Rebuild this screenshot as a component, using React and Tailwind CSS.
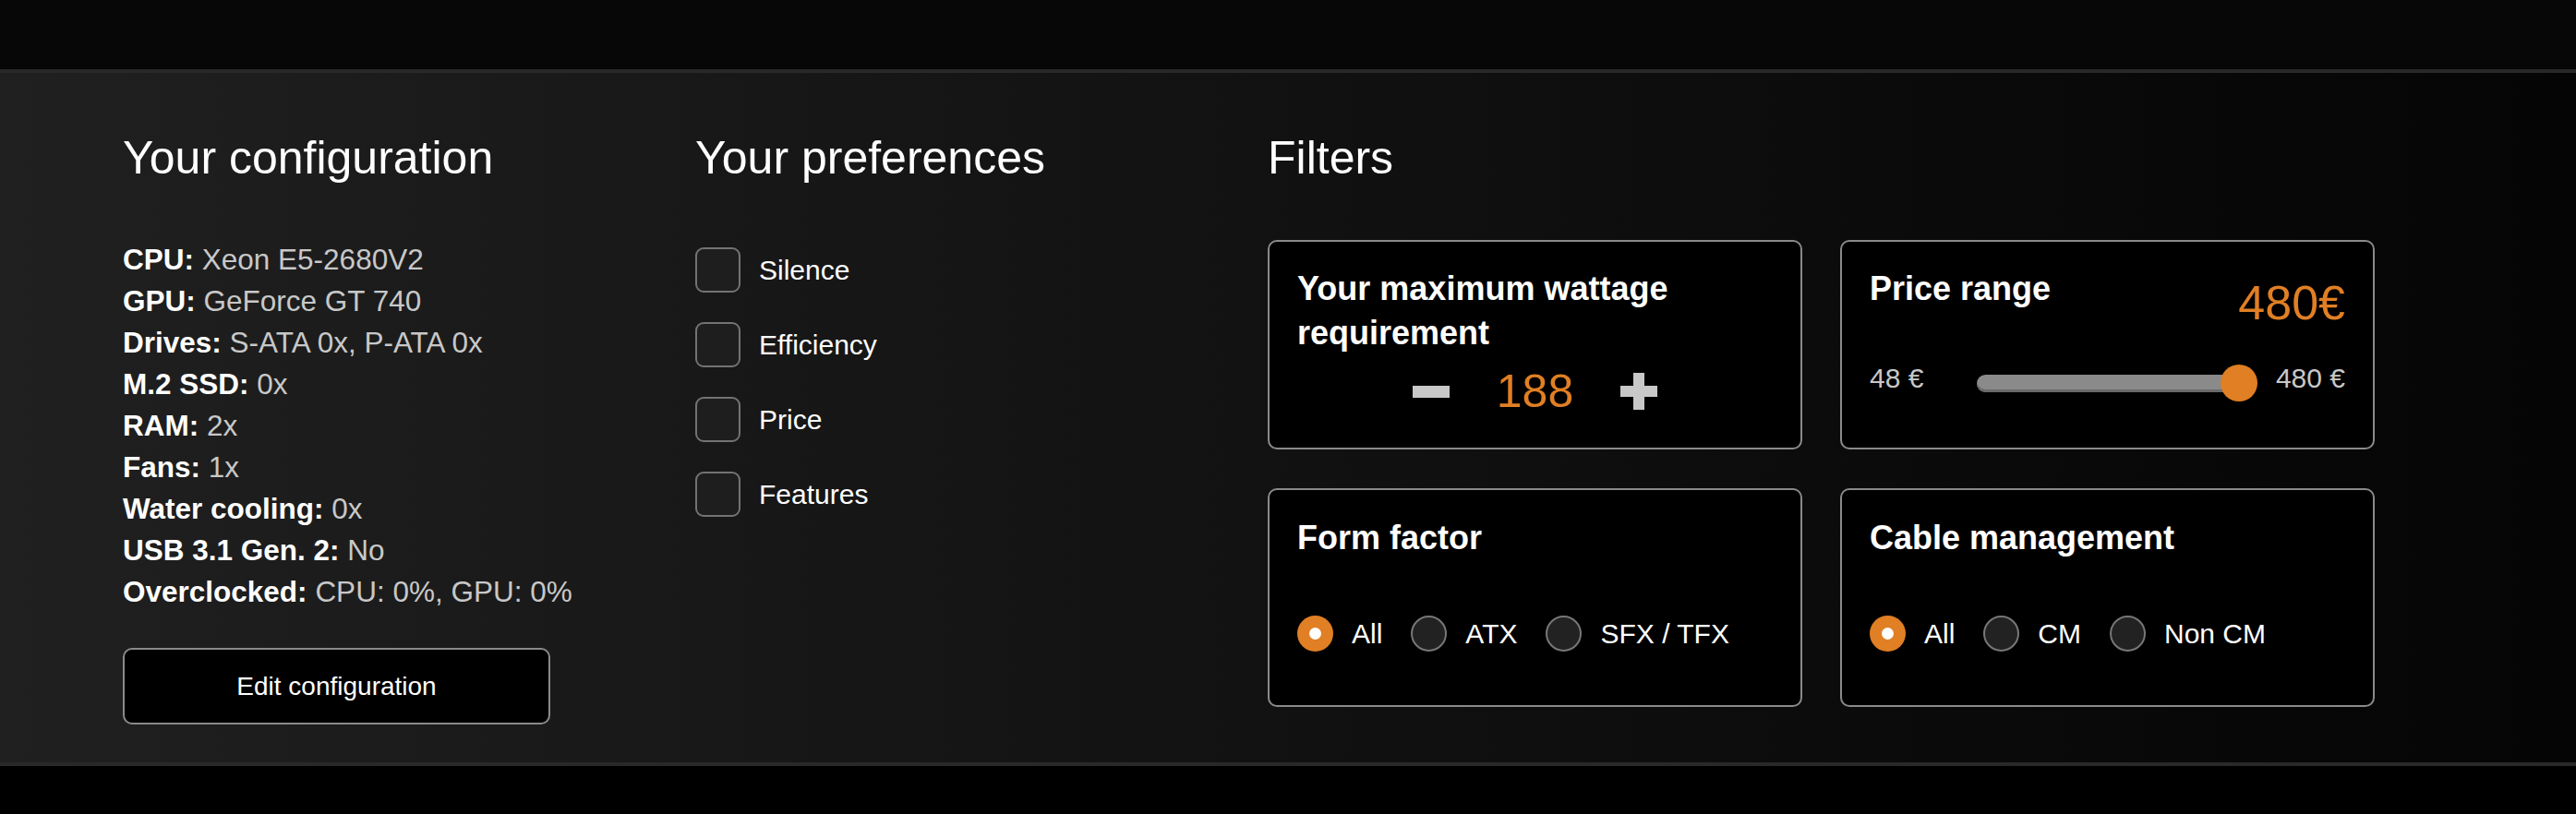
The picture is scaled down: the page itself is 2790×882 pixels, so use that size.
import React from 'react';

const config = [
  ['CPU:', 'Xeon E5-2680V2'],
  ['GPU:', 'GeForce GT 740'],
  ['Drives:', 'S-ATA 0x, P-ATA 0x'],
  ['M.2 SSD:', '0x'],
  ['RAM:', '2x'],
  ['Fans:', '1x'],
  ['Water cooling:', '0x'],
  ['USB 3.1 Gen. 2:', 'No'],
  ['Overclocked:', 'CPU: 0%, GPU: 0%'],
];

const preferences = ['Silence', 'Efficiency', 'Price', 'Features'];

function Radio({ label, checked, first }) {
  return (
    <div className={`flex items-center ${first ? '' : 'ml-[31px]'}`}>
      {checked ? (
        <span className="flex h-[39px] w-[39px] items-center justify-center rounded-full bg-[#e07f24]">
          <span className="h-[13px] w-[13px] rounded-full bg-white" />
        </span>
      ) : (
        <span className="h-[39px] w-[39px] rounded-full border-2 border-[#777] bg-[#222]" />
      )}
      <span className="ml-[20px] text-[30px] leading-[45px] text-white">{label}</span>
    </div>
  );
}

function Card({ children, className = '' }) {
  return (
    <div className={`rounded-[10px] border-2 border-[#8a8a8a] bg-black px-[30px] ${className}`}>
      {children}
    </div>
  );
}

function CardTitle({ children }) {
  return <h3 className="text-[36px] font-bold leading-[48px] text-white">{children}</h3>;
}

export default function App() {
  return (
    <div className="min-h-[882px] bg-black font-['Liberation_Sans',Arial,sans-serif]">
      <div className="h-[75px] bg-[#070707]" />

      <section className="flex border-y-4 border-[#292929] bg-linear-to-r from-[#202020] to-[#050505] pb-[41px] pl-[133px] pt-[62px]">
        {/* configuration */}
        <div className="w-[620px]">
          <h2 className="text-[50px] leading-[60px] text-white">Your configuration</h2>
          <ul className="mt-[58px] text-[31.5px] leading-[45px]">
            {config.map(([k, v]) => (
              <li key={k}>
                <span className="font-bold text-white">{k}</span>{' '}
                <span className="text-[#c8c8c8]">{v}</span>
              </li>
            ))}
          </ul>
          <button className="mt-[38px] h-[83px] w-[463px] rounded-[10px] border-2 border-[#8a8a8a] bg-black text-[28px] text-white">
            Edit configuration
          </button>
        </div>

        {/* preferences */}
        <div className="w-[620px]">
          <h2 className="text-[50px] leading-[60px] text-white">Your preferences</h2>
          <div className="mt-[67px] flex flex-col gap-[32px]">
            {preferences.map((p) => (
              <label key={p} className="flex h-[49px] items-center">
                <span className="h-[49px] w-[49px] rounded-[9px] border-2 border-[#737373] bg-[#1e1e1e]" />
                <span className="ml-[20px] text-[30px] leading-[45px] text-white">{p}</span>
              </label>
            ))}
          </div>
        </div>

        {/* filters */}
        <div>
          <h2 className="text-[50px] leading-[60px] text-white">Filters</h2>
          <div className="mt-[59px] grid grid-cols-[579px_579px] gap-x-[41px] gap-y-[42px]">
            <Card className="pb-[36px] pt-[27px]">
              <CardTitle>
                Your maximum wattage
                <br />
                requirement
              </CardTitle>
              <div className="mt-[14px] flex h-[50px] items-center justify-center">
                <span className="h-[13px] w-[40px] bg-[#c8c8c8]" />
                <span className="mx-[51px] text-[50px] leading-[50px] text-[#e07f24]">188</span>
                <span className="relative h-[40px] w-[40px]">
                  <span className="absolute left-0 top-[14px] h-[12px] w-[40px] bg-[#c8c8c8]" />
                  <span className="absolute left-[14px] top-0 h-[40px] w-[12px] bg-[#c8c8c8]" />
                </span>
              </div>
            </Card>

            <Card className="pt-[27px]">
              <div className="flex items-start justify-between">
                <CardTitle>Price range</CardTitle>
                <span className="mt-[13px] text-[52px] leading-[52px] text-[#e07f24]">480€</span>
              </div>
              <div className="mt-[29px] flex items-center">
                <span className="text-[30px] leading-[45px] text-[#c8c8c8]">48 €</span>
                <div className="relative ml-[58px] mr-[20px] mt-[12px] flex h-[40px] flex-1 items-center">
                  <div className="h-[19px] w-[calc(100%-20px)] rounded-full bg-[#8a8a8a] shadow-[inset_0_-3px_0_#6a6a6a]" />
                  <span className="absolute right-0 top-0 h-[40px] w-[40px] rounded-full bg-[#e07f24]" />
                </div>
                <span className="text-[30px] leading-[45px] text-[#c8c8c8]">480 €</span>
              </div>
            </Card>

            <Card className="pb-[55px] pt-[28px]">
              <CardTitle>Form factor</CardTitle>
              <div className="mt-[57px] flex h-[45px] items-center">
                <Radio label="All" checked first />
                <Radio label="ATX" />
                <Radio label="SFX / TFX" />
              </div>
            </Card>

            <Card className="pb-[55px] pt-[28px]">
              <CardTitle>Cable management</CardTitle>
              <div className="mt-[57px] flex h-[45px] items-center">
                <Radio label="All" checked first />
                <Radio label="CM" />
                <Radio label="Non CM" />
              </div>
            </Card>
          </div>
        </div>
      </section>

      <div className="h-[52px] bg-black" />
    </div>
  );
}
